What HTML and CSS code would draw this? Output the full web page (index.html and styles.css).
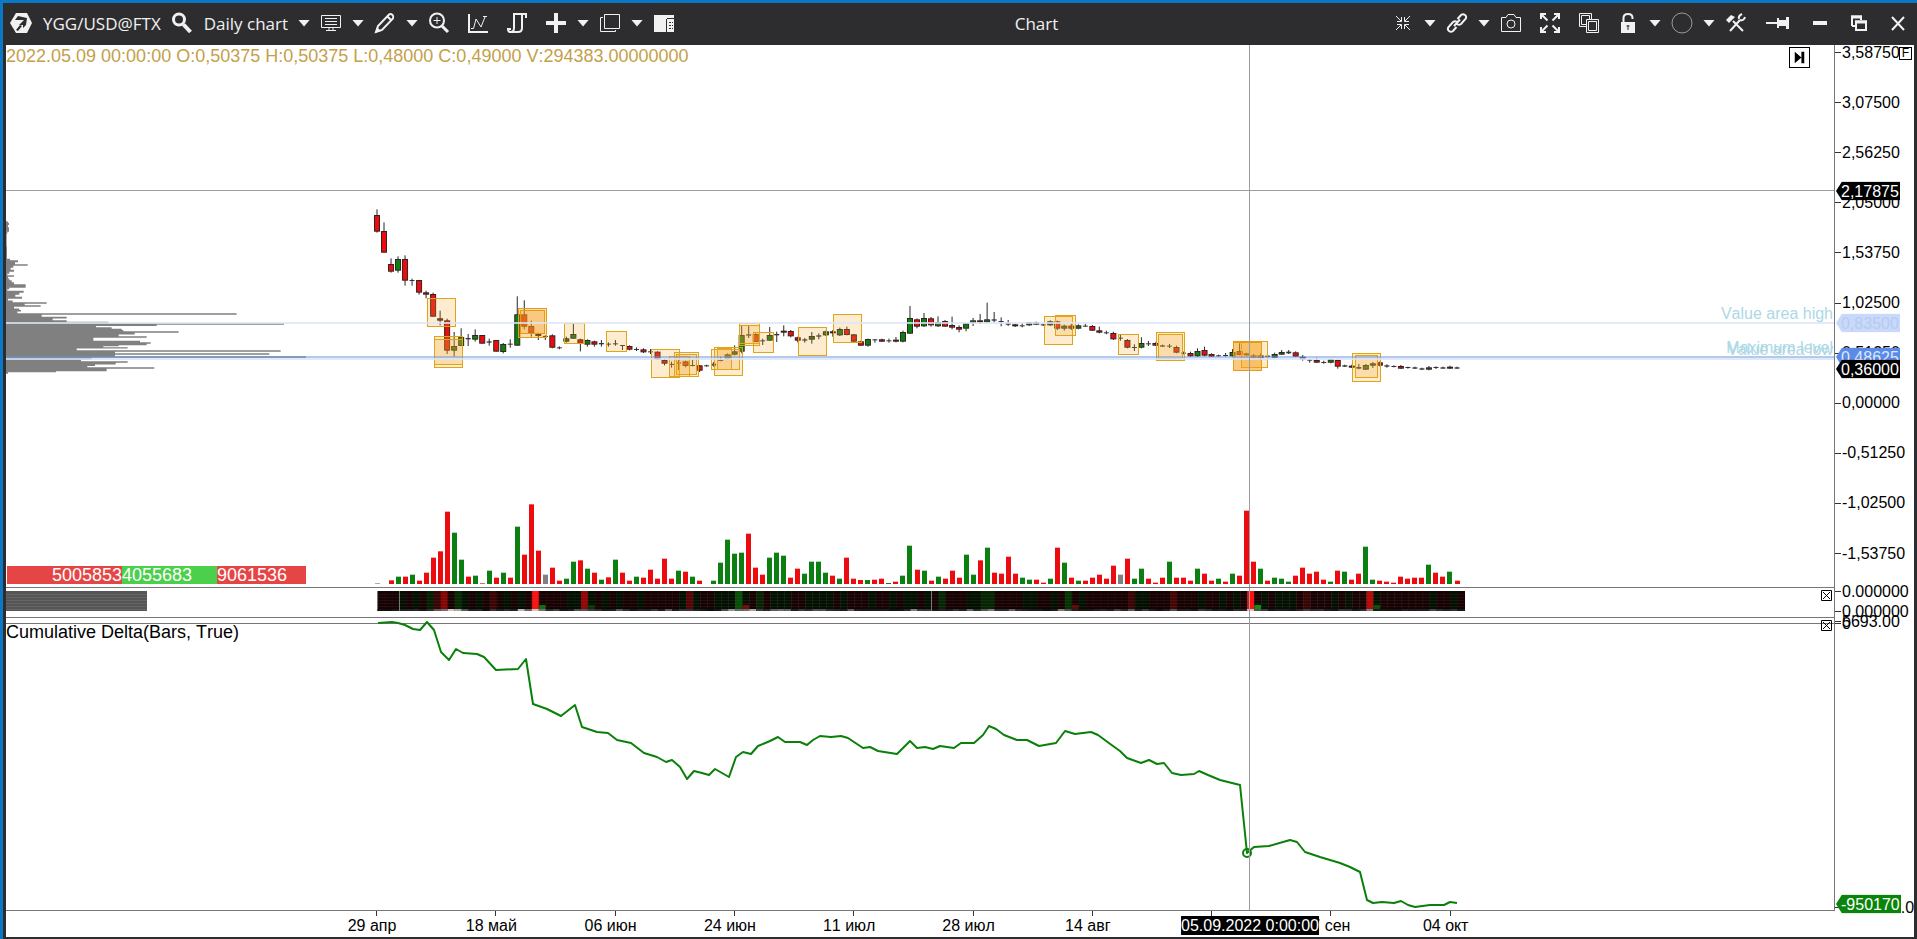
FILE: index.html
```html
<!DOCTYPE html>
<html lang="en">
<head>
<meta charset="utf-8">
<title>Chart</title>
<link rel="stylesheet" href="styles.css">
</head>
<body>
<div class="window">
  <header class="toolbar">
    <div class="tools">
      <button class="tool" aria-label="Application menu"><svg class="icon" viewBox="0 0 22 22"><path class="solid" d="M6 1h11l5 10-5 10H6L0 11z"/><path class="cut" d="M5 8l3-4 9 2-1 7-3 3v-3H9l5-5zM6 18l4-5 2 1-4 5z"/></svg></button>
      <button class="tool text">YGG/USD@FTX</button>
      <button class="tool" aria-label="Find instrument"><svg class="icon" viewBox="0 0 22 22"><circle class="thick" cx="8" cy="7.500" r="5.500"/><path class="heavy" d="M12.500 12.500l7 7.500"/></svg></button>
      <button class="tool text">Daily chart</button>
      <button class="caret" aria-label="Timeframes"></button>
      <button class="tool" aria-label="Chart type"><svg class="icon" viewBox="0 0 22 22"><path d="M1.500 3.500h19v12h-19zM5 6.500h12M5 9.500h12M5 12.500h12M6 18.500h10M9 16v2M13 16v2"/></svg></button>
      <button class="caret" aria-label="Chart type list"></button>
      <button class="tool" aria-label="Draw"><svg class="icon" viewBox="0 0 22 22"><path class="mid" d="M2 20l2-6L15 2.500q2-1 3.500.500t.500 3.500L8 18zM13.500 4.500L17 8"/><path class="solid" d="M1 21l2-6 4 4z"/></svg></button>
      <button class="caret" aria-label="Drawing list"></button>
      <button class="tool" aria-label="Zoom in"><svg class="icon" viewBox="0 0 22 22"><circle class="mid" cx="9" cy="8.500" r="7"/><path d="M5.500 8.500h7M9 5v7"/><path class="thick" d="M14 14l6 6"/></svg></button>
      <button class="tool wide" aria-label="Indicators"><svg class="icon" viewBox="0 0 22 22"><path class="mid" d="M2 2v18h19"/><path d="M4 16.500h2.500L9 7l5 8 4-10M16 4.500h4"/></svg></button>
      <button class="tool wide" aria-label="Strategies"><svg class="icon" viewBox="0 0 22 22"><path class="mid" d="M20 6V2H8v14q0 4-3.500 4Q2 20 2 17h3M16 2v14q0 4-4 4H4"/></svg></button>
      <button class="tool wide" aria-label="Add"><svg class="icon" viewBox="0 0 22 22"><path class="heavy" d="M11 1v20M1 11h20"/></svg></button>
      <button class="caret" aria-label="Add list"></button>
      <button class="tool" aria-label="Templates"><svg class="icon" viewBox="0 0 22 22"><path d="M5.500 2.500h15v14h-15zM4 5.500H1.500v14h15V18"/></svg></button>
      <button class="caret" aria-label="Template list"></button>
      <button class="tool" aria-label="Side panel"><svg class="icon" viewBox="0 0 22 22"><path class="solid" d="M1 3h20v17H1z"/><path class="cutline" d="M13.500 7v13M14 6.500h7M16 10.500h2M16 13.500h2M16 16.500h2M19 10.500h1M19 13.500h1M19 16.500h1"/></svg></button>
    </div>
    <h1 class="title">Chart</h1>
    <div class="tools">
      <button class="tool" aria-label="Collapse"><svg class="icon" viewBox="0 0 22 22"><path d="M4 4l5 5M18 4l-5 5M4 18l5-5M18 18l-5-5M9.500 5v4.500H5M12.500 5v4.500H17M9.500 17v-4.500H5M12.500 17v-4.500H17"/></svg></button>
      <button class="caret" aria-label="Collapse list"></button>
      <button class="tool" aria-label="Link"><svg class="icon" viewBox="0 0 22 22"><path class="mid" d="M11.500 7l3.500-4q2-1.500 4 0t.500 4L15 12q-2 1.500-4 0M10.500 15L7 19q-2 1.500-4 0t-.500-4L7 10q2-1.500 4 0M8 14l6-6.500"/></svg></button>
      <button class="caret" aria-label="Link list"></button>
      <button class="tool" aria-label="Screenshot"><svg class="icon" viewBox="0 0 22 22"><path d="M1.500 5.500H6L8 2.500h6l2 3h4.500v14h-19z"/><circle cx="11" cy="12" r="4"/></svg></button>
      <button class="tool wide" aria-label="Full screen"><svg class="icon" viewBox="0 0 22 22"><path class="mid" d="M2 7V2h5M15 2h5v5M2 15v5h5M15 20h5v-5M2 2l6.500 6.500M20 2l-6.500 6.500M2 20l6.500-6.500M20 20l-6.500-6.500"/></svg></button>
      <button class="tool wide" aria-label="Duplicate"><svg class="icon" viewBox="0 0 22 22"><path d="M1.500 1.500h12v13h-12zM3.500 3.500h8v9h-8z"/><path class="cutfill" d="M8 7h13v14H8z"/><path d="M8.500 7.500h12v13h-12zM10.500 9.500h8v9h-8z"/></svg></button>
      <button class="tool wide" aria-label="Lock"><svg class="icon" viewBox="0 0 22 22"><path class="mid" d="M6.500 11V6q0-4 4.500-4t4.500 4v1"/><path class="solid" d="M4 10h14v11H4z"/><path class="cutline" d="M11 13v5M9.500 14h3"/></svg></button>
      <button class="caret" aria-label="Lock list"></button>
      <button class="tool" aria-label="Color group"><svg class="icon" viewBox="0 0 22 22"><circle class="faint" cx="11" cy="11" r="10"/></svg></button>
      <button class="caret" aria-label="Color group list"></button>
      <button class="tool" aria-label="Settings"><svg class="icon" viewBox="0 0 22 22"><path class="mid" d="M5 19L15 8M8 9l10 10M14 7q-1-3 3-5M15 8q4 1 5-3"/><path class="solid" d="M1 8l5-5 4 2-6 6z"/></svg></button>
      <button class="tool wide" aria-label="Pin"><svg class="icon pin" viewBox="0 0 28 22"><path class="solid" d="M2 10h11V6h2v2h7V5h3v12h-3v-3h-7v2h-2v-4H2z"/></svg></button>
      <button class="tool wide" aria-label="Minimize"><svg class="icon" viewBox="0 0 22 22"><path class="heavy" d="M4 11h14"/></svg></button>
      <button class="tool wide" aria-label="Restore"><svg class="icon" viewBox="0 0 22 22"><path class="mid" d="M4 14V4.500h9V8M8 9.500h10V18H8zM4 14h3"/><path class="thick" d="M3 5h11M7 10h12"/></svg></button>
      <button class="tool wide" aria-label="Close"><svg class="icon" viewBox="0 0 22 22"><path class="mid" d="M5 5l12 13M17 5L5 18"/></svg></button>
    </div>
  </header>

  <main class="chart">
    <section class="row row-price">
      <div class="plot">
        <svg class="canvas" id="price" viewBox="6 45 1828 542" preserveAspectRatio="none"></svg>
        <p class="quote">2022.05.09 00:00:00 O:0,50375 H:0,50375 L:0,48000 C:0,49000 V:294383.00000000</p>
        <button class="go-end" aria-label="Go to last bar"><svg viewBox="0 0 20 20"><path d="M5 4v12l7-6zM12 4h3v12h-3z"/></svg></button>
        <div class="levels" id="levels"></div>
        <div class="totals">
          <span class="total sell first">5005853</span><span class="total buy">4055683</span><span class="total sell">9061536</span>
        </div>
      </div>
      <div class="axis" id="price-axis"><button class="fix">F</button></div>
    </section>
    <section class="row row-heat">
      <div class="plot">
        <svg class="canvas" id="heat" viewBox="6 588 1828 29" preserveAspectRatio="none"></svg>
        <button class="close" aria-label="Close heat map"><svg viewBox="0 0 11 11"><path d="M.500.500h10v10h-10zM2 2l7 7M9 2L2 9"/></svg></button>
      </div>
      <div class="axis" id="heat-axis"></div>
    </section>
    <section class="row row-delta">
      <div class="plot">
        <svg class="canvas" id="delta" viewBox="6 618 1828 292" preserveAspectRatio="none"></svg>
        <p class="caption">Cumulative Delta(Bars, True)</p>
        <button class="close" aria-label="Close cumulative delta"><svg viewBox="0 0 11 11"><path d="M.500.500h10v10h-10zM2 2l7 7M9 2L2 9"/></svg></button>
      </div>
      <div class="axis" id="delta-axis"></div>
    </section>
    <section class="row row-dates">
      <div class="dates" id="dates"></div>
    </section>
  </main>
</div>
<script src="chart.js"></script>
</body>
</html>
```
FILE: styles.css
```css
* { box-sizing: border-box; }

body {
  margin: 0;
  font-family: "Liberation Sans", Arial, sans-serif;
  font-size: 16px;
  font-kerning: none;
  color: #000;
}

button {
  margin: 0;
  padding: 0;
  border: 0;
  background: none;
  color: inherit;
  font: inherit;
}

p { margin: 0; }

.window {
  display: flex;
  flex-direction: column;
  height: 100vh;
  min-height: 480px;
  border-top: 3px solid #0a78c4;
  border-left: 3px solid #0a78c4;
  background: #2d2d30;
  overflow: hidden;
}

/* Toolbar */
.toolbar {
  display: flex;
  align-items: center;
  height: 42px;
  flex: none;
  padding: 0 8px 2px 7px;
  color: #f1f1f1;
  font-family: "Open Sans", "Noto Sans", sans-serif;
  font-size: 17px;
}

.tools {
  display: flex;
  align-items: center;
  gap: 10px;
}

.tool {
  display: flex;
  white-space: nowrap;
}

.tool.text { padding-left: 1px; }
.tool.wide { margin-left: 7px; }

.title {
  flex: 1;
  margin: 0;
  padding-left: 6px;
  font-size: 17px;
  font-weight: 400;
  text-align: center;
}

.caret {
  width: 12px;
  height: 7px;
  background: #f1f1f1;
  clip-path: polygon(0 0, 100% 0, 50% 100%);
}

.icon {
  display: block;
  width: 22px;
  height: 22px;
  fill: none;
  stroke: #f1f1f1;
  stroke-width: 1;
}

.icon.pin { width: 28px; }

.icon .mid { stroke-width: 2; }
.icon .thick { stroke-width: 3; }
.icon .heavy { stroke-width: 4; }
.icon .solid { fill: #f1f1f1; stroke: none; }
.icon .cut { fill: #2d2d30; stroke: none; }
.icon .cutfill { fill: #2d2d30; stroke: none; }
.icon .cutline { stroke: #2d2d30; }
.icon .faint { stroke: #9a9a9a; }

/* Chart */
.chart {
  display: flex;
  flex-direction: column;
  flex: 1;
  min-height: 0;
  margin: 0 3px 2px;
  background: #fff;
  overflow: hidden;
}

.row {
  display: grid;
  grid-template-columns: minmax(0, 1fr) 80px;
}

.row-price { flex: 543 1 0; }
.row-heat { flex: none; height: 30px; }
.row-delta { flex: 293 1 0; }
.row-dates { flex: none; height: 26px; }

.plot {
  position: relative;
  border-bottom: 1px solid #777;
}

.canvas {
  position: absolute;
  inset: 0;
  width: 100%;
  height: 100%;
}

.axis {
  position: relative;
  border-left: 1px solid #777;
}

.quote {
  position: relative;
  padding-top: 1px;
  font-size: 18px;
  line-height: 20px;
  color: #c4a04a;
}

.caption {
  position: relative;
  padding-top: 4px;
  font-size: 18px;
  line-height: 20px;
}

.go-end {
  position: absolute;
  top: 2px;
  right: 24px;
  width: 21px;
  height: 21px;
  border: 1px solid #000;
}

.go-end svg { display: block; }

.close {
  position: absolute;
  top: 2px;
  right: 2px;
  width: 11px;
  height: 11px;
}

.close svg {
  display: block;
  fill: none;
  stroke: #000;
}

.fix {
  position: absolute;
  top: 2px;
  right: 2px;
  width: 13px;
  height: 13px;
  border: 1px solid #000;
  font-size: 12px;
  line-height: 11px;
}

.level {
  position: absolute;
  right: 1px;
  line-height: 18px;
  color: #add8e6;
  transform: translateY(-100%);
}

.totals {
  position: absolute;
  left: 0;
  bottom: 3px;
  display: flex;
  width: 300px;
  padding-left: 1px;
  font-size: 18px;
  line-height: 18px;
  color: #fff;
}

.total { flex: 89 1 0; }
.total.first { flex: 115 1 0; text-align: right; }
.total.sell { background: #e64545; }
.total.buy { flex: 95 1 0; background: #4bd04b; }

.scale {
  position: absolute;
  left: 0;
  display: flex;
  align-items: center;
  gap: 1px;
  line-height: 18px;
  transform: translateY(-50%);
}

.scale::before {
  content: "";
  width: 6px;
  height: 1px;
  background: #333;
}

.tag {
  position: absolute;
  left: 1px;
  width: 64px;
  padding-left: 5px;
  line-height: 19px;
  color: #fff;
  background: #000;
  clip-path: polygon(0 50%, 6px 0, 100% 0, 100% 100%, 6px 100%);
  transform: translateY(-50%);
}

.tag.high { background: #c8d9fc; color: #b8cbee; }
.tag.max { background: #5b8be6; color: #dce8ff; }
.tag.delta { width: 65px; background: #0a840a; }

.dates { position: relative; }

.date {
  position: absolute;
  top: 5px;
  line-height: 19px;
  white-space: nowrap;
  transform: translateX(-50%);
}

.tick {
  position: absolute;
  top: 0;
  width: 1px;
  height: 5px;
  background: #333;
}

.date.cursor {
  background: #000;
  color: #fff;
}

/* Series */
.wick { stroke: #26262c; stroke-width: 1; }
.body { stroke: #33231f; stroke-width: 1; }
.up { fill: #0c7f12; }
.down { fill: #ec0c10; }
.flat { fill: #33333a; }
.none { fill: #808080; }
.profile { fill: #808080; }
.box { fill: #f7a928; fill-opacity: 0.22; stroke: #e0a418; }
.hot { fill: #f7a020; fill-opacity: 0.35; stroke: #e89c10; }
.line-high { fill: #dce6fa; fill-opacity: 0.8; }
.line-max { fill: #6c94dc; fill-opacity: 0.5; }
.line-low { fill: #d6e4fc; fill-opacity: 0.8; }
.cross { fill: #9c9c9c; }
.zero { fill: #777; }
.block { fill: #555; }
.block-line { fill: #666; }
.delta-line { fill: none; stroke: #0a800a; stroke-width: 2; stroke-linejoin: round; }
```
FILE: chart.js
```js
const NS = "http://www.w3.org/2000/svg";
const FIRST = 377, STEP = 7.013;
const barX = i => FIRST + i * STEP;

function draw(parent, tag, attrs) {
  const el = document.createElementNS(NS, tag);
  for (const k in attrs) el.setAttribute(k, attrs[k]);
  parent.appendChild(el);
  return el;
}
function rect(parent, cls, x, y, w, h) {
  return draw(parent, "rect", { class: cls, x, y, width: w, height: h });
}
function label(parent, cls, text, pos) {
  const el = document.createElement("span");
  el.className = cls;
  el.textContent = text;
  Object.assign(el.style, pos);
  parent.appendChild(el);
}

const price = document.getElementById("price");
const heat = document.getElementById("heat");
const delta = document.getElementById("delta");

/* Volume profile: level and length, in thirds of a pixel */
const profile = [[65,24],[72,27],[78,24],[86,27],[92,27],[98,22],[104,20],[175,21],[178,30],[184,54],[190,45],[195,83],[200,40],[206,32],[212,42],[218,28],[224,22],[228,42],[233,24],[238,28],[244,35],[250,42],[255,77],[261,77],[266,28],[270,22],[275,71],[281,58],[287,46],[293,66],[299,24],[304,38],[309,140],[314,74],[318,122],[323,42],[328,58],[332,63],[337,52],[342,710],[347,125],[353,200],[358,158],[363,200],[368,325],[372,852],[376,470],[380,288],[384,335],[388,365],[392,370],[396,536],[401,404],[406,356],[411,440],[416,280],[420,280],[425,420],[429,452],[434,440],[438,356],[440,310],[443,383],[448,230],[453,842],[458,345],[462,808],[466,345],[471,918],[476,275],[481,243],[486,383],[491,347],[496,285],[500,262],[504,463],[508,320],[512,320],[515,168],[519,24],[523,18]];
let outline = "M6 221";
for (let i = 0; i < profile.length - 1; i++) {
  const top = i ? (profile[i - 1][0] + profile[i][0]) / 6 : profile[0][0] / 3;
  const bottom = (profile[i][0] + profile[i + 1][0]) / 6;
  outline += `L${profile[i][1] / 3} ${200 + top}V${200 + bottom}`;
}
draw(price, "path", { class: "profile", d: outline + "H6Z" });

/* Candles: color, high, body top, body bottom, low, in thirds of a pixel from the base */
const candles = [
  { base: 190, rows: "r58,75,125,128 r97,123,188,188 r205,222,245,248 g199,207,242,248 r196,207,272,287 k266,270,272,287 r270,270,308,314 r302,307,314,325 r308,312,380,380 r362,385,392,406 r386,391,482,492 g426,468,482,500 g415,441,468,468 k432,444,448,468 g418,435,449,455 r435,435,461,461 k446,454,458,467 r450,450,485,485 g459,462,486,490 k448,461,463,473 g319,373,467,467 r331,373,410,418 r392,408,430,440 r428,432,438,450 k436,438,440,450 r433,436,473,475 k469,472,475,478 g440,445,455,458 g401,432,446,446 r446,448,461,484 g448,450,464,470 r452,454,464,470 k450,459,463,470 k457,461,464,470 k450,460,463,467 k465,465,467,480 r466,468,479,481 k472,477,479,483 r475,478,487,489 k477,484,487,492 r484,485,508,510 r507,510,521,526 k515,522,524,533 k510,517,521,540 r512,514,528,532 k510,525,527,529 r525,526,542,546 k524,526,529,530 k516,521,527,530 k500,510,512,514 g490,493,508,510 g466,484,494,496 g405,435,485,490 k408,433,437,444" },
  { base: 280, rows: "r160,162,186,186 k176,181,184,195 g141,165,182,182 k155,162,166,186 g136,152,158,169 r150,153,169,172 r170,172,182,187 k174,178,182,188 g156,168,179,191 k160,166,170,178 g152,154,166,168 r150,154,160,170 g143,147,166,168 r140,147,165,166 r162,163,185,186 r182,184,197,198 g176,177,197,200 k177,178,180,188 r176,178,185,186 k176,181,184,188 r171,179,185,187 g152,156,185,187 g78,114,161,162 r115,118,140,145 g99,114,139,141 r111,115,136,140 g109,126,139,141 r120,123,140,140 r110,135,143,148 r136,141,149,157 g129,130,146,154 g114,121,129,138 r102,121,127,132 g68,118,127,128 k96,118,122,128 k112,123,125,139 k120,129,134,138 r131,133,139,141 k130,136,139,142 g126,127,136,138 g125,127,134,135 k131,133,136,138 g121,124,136,138 r122,124,146,150 g134,137,146,152 r130,137,146,150 g133,136,146,148 k131,137,139,140 r135,138,152,153 r140,151,158,160 k152,157,160,163 r155,159,178,180 k162,173,176,182 r177,180,203,205" },
  { base: 290, rows: "k163,171,173,183 g142,159,173,175 k153,160,162,168 r157,159,167,168 k164,166,170,171 k162,167,169,174 r167,171,188,190 k185,188,191,193 r185,189,199,201 g175,183,199,201 r170,180,197,199 r190,192,200,201 k194,196,199,200 k189,195,198,200 g177,186,199,200 r160,183,195,196 r188,190,196,198 r192,196,203,205 g190,196,204,210 k194,197,201,204 g188,192,203,204 g180,186,194,195 k180,185,190,192 r184,187,200,201 r195,200,208,212 k208,209,211,218 r203,210,218,219 k212,216,218,221 g206,208,218,220 r208,210,230,236 k224,226,230,231 r224,227,233,234 k222,231,236,238 g222,225,239,240 g216,220,227,234 r214,217,227,229 k223,226,230,233 k226,228,230,232 r225,228,236,237 k230,231,233,236 k230,232,236,237 k233,235,239,240 g228,232,239,241 k229,231,233,237 k230,232,236,236 g227,230,236,237 k230,232,236,236" }
];
const CLASSES = { r: "down", g: "up", k: "flat", n: "none" };
let n = 0;
for (const part of candles) {
  for (const row of part.rows.split(" ")) {
    const [hi, top, bottom, lo] = row.slice(1).split(",").map(v => part.base + v / 3);
    const x = barX(n++);
    draw(price, "line", { class: "wick", x1: x, x2: x, y1: hi, y2: lo });
    if (row[0] === "k") rect(price, "flat", x - 2.5, top, 5, Math.max(1, bottom - top));
    else rect(price, "body " + CLASSES[row[0]], x - 2.5, top + 0.5, 5, Math.max(1, bottom - top - 1));
  }
}

/* Cluster search boxes: left, top, right, bottom */
const boxes = [
  [427,298,455,326],[434,336,462,364],[434,339,462,367],[564,323,584,343],[606,331,626,351],[651,349,679,377],[674,352,698,376],[676,354,696,374],[669,356,689,376],[711,349,739,369],[717,348,731,369],[714,347,742,375],[739,323,759,343],[739,325,759,345],[753,332,773,352],[798,327,826,355],[833,314,861,342],[1044,316,1072,344],[1055,315,1075,335],[1118,334,1138,354],[1156,332,1184,360],[1158,334,1182,358],[1241,341,1267,367],[1352,353,1380,381],[1355,355,1377,377]
];
for (const [l, t, r, b] of boxes) rect(price, "box", l + 0.5, t + 0.5, r - l, b - t);
for (const [l, t, r, b] of [[518,308,546,337],[520,310,544,333],[1233,341,1261,370],[1233,342,1261,370]]) rect(price, "hot", l + 0.5, t + 0.5, r - l, b - t);

rect(price, "line-high", 6, 322, 1828, 2);
rect(price, "line-max", 6, 356, 1828, 2);
rect(price, "line-low", 6, 358, 1828, 2);

/* Volume: color and height in thirds of a pixel */
const volume = "n2 - r11 g22 r22 g28 r10 r34 r79 r98 r217 g154 g73 r22 g25 r2 g40 r19 g34 r19 g172 r88 r239 r100 n28 r49 r10 g16 g67 r71 g46 r34 g13 r20 g73 r34 r10 g22 r19 r43 r16 r76 r16 g40 r37 g22 r10 - g10 g64 g133 g91 g94 r151 r49 r28 g79 g94 g85 r19 r46 g31 g67 g67 g34 r25 g16 r79 r16 r12 g12 r13 r16 g3 r7 g25 g115 r43 g40 r10 g22 r16 r40 r19 g88 g28 r71 g109 r34 r31 r82 r31 g19 g13 r13 r4 g16 r109 g64 r19 g10 r10 r19 r28 r16 r55 n28 r76 g16 g46 r16 r4 r19 g67 r19 r19 r10 g46 r31 r10 g16 r7 g31 r25 r220 r67 g46 r10 g19 g16 g7 r25 r49 r31 r37 r13 g7 r40 g37 r13 r31 g112 g13 r10 r7 r4 r22 r16 r19 r19 g58 r34 r22 g37 r10".split(" ");
const hotColumns = { 7: "#031f03", 8: "#380404", 9: "#860606", 11: "#042c04", 16: "#3c0404", 22: "#ff1212", 29: "#950707", 44: "#560404", 51: "#075007", 54: "#042404", 80: "#042804", 86: "#032603", 87: "#032603", 98: "#043404", 107: "#3c0404", 113: "#460404", 124: "#ff1010", 132: "#380404", 141: "#b80808" };
const accents = { 23: "#0b700b", 30: "#063806", 52: "#780808", 99: "#600606", 125: "#0b900b", 142: "#075007" };

rect(heat, "block", 6, 591, 141, 20);
for (let y = 594; y < 610; y += 3) rect(heat, "block-line", 6, y, 141, 1);

volume.forEach((v, i) => {
  const x = barX(i), size = v === "-" ? 0 : v.slice(1) / 3;
  if (size) rect(price, CLASSES[v[0]], Math.round(x - 2.5), 584 - size, 5, size);
  const fill = hotColumns[i] || (v[0] === "g" ? "#021002" : "#160203");
  rect(heat, "", x + 0.5, 591, STEP + 0.5, 20).setAttribute("fill", fill);
  if (accents[i]) rect(heat, "", x + 0.5, 605, STEP, 4).setAttribute("fill", accents[i]);
  const g = Math.min(200, 14 + Math.round(size * 3));
  rect(heat, "", x + 0.5, 609, STEP + 0.5, 2).setAttribute("fill", `rgb(${g},${g},${g})`);
  rect(heat, "", x + 0.5, 591, 1, 17).setAttribute("fill", v[0] === "g" ? "#12301244" : "#40181844");
});
for (let y = 594; y < 609; y += 3) rect(heat, "", 377, y, 1087, 1).setAttribute("fill", "rgba(110,90,80,0.16)");
for (const x of [399, 931]) rect(heat, "", x, 591, 1, 20).setAttribute("fill", "#777");

/* Cumulative delta */
const track = [[378,623],[392,622],[398,623],[405,625],[413,629],[420,630],[427,622],[434,630],[441,652],[449,660],[456,649],[463,653],[477,654],[484,657],[496,670],[518,669],[526,659],[533,704],[547,709],[561,716],[575,705],[582,727],[597,732],[608,733],[617,740],[631,743],[644,753],[657,757],[666,762],[672,760],[680,767],[687,779],[694,771],[702,773],[709,775],[715,769],[729,777],[736,757],[743,752],[751,754],[758,746],[770,741],[778,737],[785,742],[800,742],[807,745],[813,740],[820,736],[831,737],[841,736],[848,738],[863,748],[870,747],[878,751],[897,754],[910,741],[917,748],[925,747],[933,749],[940,746],[954,748],[961,743],[974,743],[983,735],[989,726],[996,729],[1004,735],[1017,740],[1027,740],[1039,746],[1056,743],[1065,731],[1075,734],[1091,732],[1098,735],[1113,746],[1120,751],[1127,758],[1141,763],[1149,760],[1157,764],[1164,763],[1172,773],[1181,775],[1194,774],[1199,771],[1208,775],[1220,780],[1240,785],[1247,853],[1254,847],[1269,846],[1290,840],[1297,842],[1305,852],[1320,857],[1340,863],[1350,867],[1360,872],[1367,900],[1373,903],[1382,902],[1394,903],[1401,901],[1408,905],[1415,907],[1430,905],[1444,905],[1450,902],[1457,903]];
rect(delta, "zero", 6, 623, 1828, 1);
draw(delta, "polyline", { class: "delta-line", points: track.join(" ") });
draw(delta, "circle", { class: "delta-line", cx: 1247, cy: 853, r: 4 });

/* Crosshair */
rect(price, "cross", 1249, 45, 1, 542);
rect(price, "cross", 6, 190, 1828, 1);
rect(heat, "cross", 1249, 588, 1, 29);
rect(delta, "cross", 1249, 618, 1, 292);

/* Scale labels */
const inPane = (y, top, height) => ({ top: (y - top) / height * 100 + "%" });
const priceAxis = document.getElementById("price-axis");
const heatAxis = document.getElementById("heat-axis");
const deltaAxis = document.getElementById("delta-axis");
["3,58750","3,07500","2,56250","2,05000","1,53750","1,02500","0,51250","0,00000","-0,51250","-1,02500","-1,53750"]
  .forEach((t, i) => label(priceAxis, "scale", t, inPane(52.5 + i * 50.1, 45, 543)));
label(priceAxis, "tag", "2,17875", inPane(191, 45, 543));
label(priceAxis, "tag high", "0,83500", inPane(323, 45, 543));
label(priceAxis, "tag max", "0,48625", inPane(357, 45, 543));
label(priceAxis, "tag", "0,36000", inPane(369, 45, 543));
label(heatAxis, "scale", "0.000000", inPane(591.5, 588, 30));
label(heatAxis, "scale", "0.000000", inPane(611.5, 588, 30));
label(deltaAxis, "scale", "5693.00", inPane(622, 618, 293));
label(deltaAxis, "scale", "0", inPane(623.5, 618, 293));
label(deltaAxis, "scale", "-950170.00", inPane(907.5, 618, 293));
label(deltaAxis, "tag delta", "-950170", inPane(904, 618, 293));

const levels = document.getElementById("levels");
label(levels, "level", "Value area high", inPane(323, 45, 542));
label(levels, "level", "Maximum level", inPane(357, 45, 542));
label(levels, "level", "Value area low", inPane(359, 45, 542));

/* Dates */
const dates = document.getElementById("dates");
const across = x => ({ left: (x - 6) / 1828 * 100 + "%" });
["29 апр","18 май","06 июн","24 июн","11 июл","28 июл","14 авг","","17 сен","04 окт"].forEach((t, i) => {
  const x = 376 + i * 119.3;
  label(dates, "tick", "", across(x));
  if (t) label(dates, "date", t, across(x - 4));
});
label(dates, "date cursor", "05.09.2022 0:00:00", across(1250));
```
